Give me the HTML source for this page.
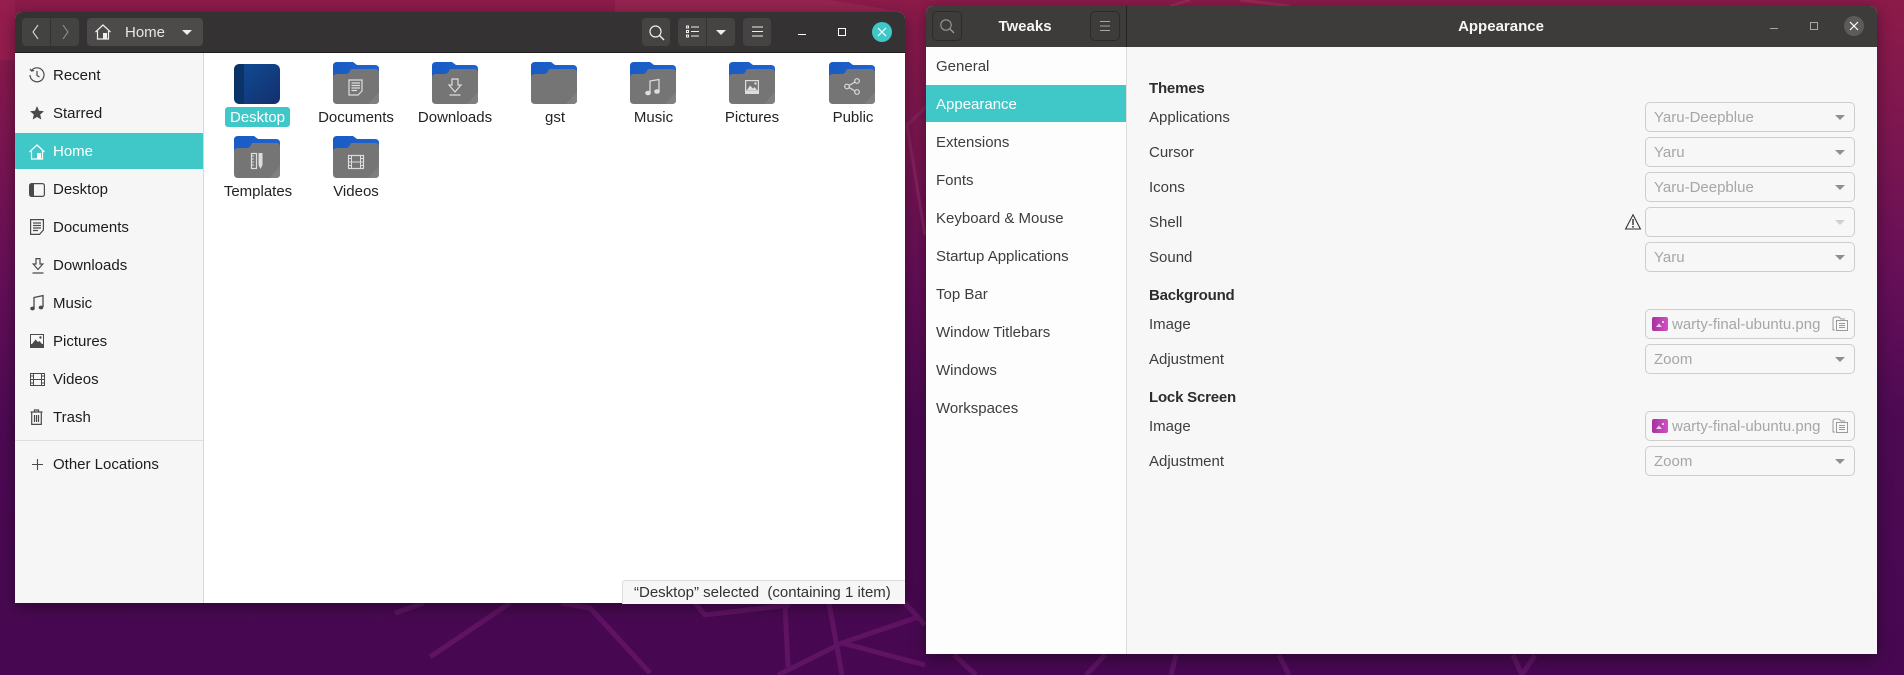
<!DOCTYPE html>
<html><head><meta charset="utf-8"><title>Desktop</title>
<style>
html,body{margin:0;padding:0;width:1904px;height:675px;overflow:hidden;background:#4a0850}
body{position:relative;font-family:"Liberation Sans",sans-serif;font-size:15px;color:#222}
#bg{position:absolute;left:0;top:0;width:1904px;height:675px}
.win{position:absolute;box-shadow:0 4px 16px rgba(0,0,0,.4);border-radius:7px 7px 0 0}
.a{position:absolute}
.t{position:absolute;white-space:nowrap;line-height:20px;height:20px;margin-top:1px}
.c{transform:translateX(-50%)}
.btn{position:absolute;background:#454443;border-radius:4px;top:18px;height:28px}
.tb{position:absolute;border:1px solid #2c2b2a;border-radius:5px;top:11px;height:28px;width:28px}
.side{color:#1c1c1c}
.tw{color:#3d3d3d}
.lab{color:#3d3d3d}
.b{font-weight:bold;color:#2d2d2d;letter-spacing:-.2px;margin-top:0}
.box{position:absolute;left:1645px;width:208px;height:28px;border:1px solid #cdcdcd;border-radius:5px;background:#f7f7f7}
.v{position:absolute;left:1654px;color:#a6a6a6;white-space:nowrap;line-height:20px;margin-top:1px}
.ar{position:absolute;width:0;height:0;border-left:5px solid transparent;border-right:5px solid transparent;border-top:5px solid #8f8f8f;left:1835px}
svg{position:absolute;overflow:visible}
.ic{fill:none;stroke:#4a4a4a;stroke-width:1.2}
.fo{stroke:#ddd;fill:none;stroke-width:1.2}
.ff{fill:#ddd;stroke:none}
</style></head><body>
<svg id="bg" viewBox="0 0 1904 675" style="position:absolute">
<defs><linearGradient id="g" x1="0" y1="0" x2="0" y2="1">
<stop offset="0" stop-color="#8c1b49"/><stop offset=".2" stop-color="#7c1650"/><stop offset=".4" stop-color="#670f58"/><stop offset=".62" stop-color="#4d0a53"/><stop offset="1" stop-color="#470851"/></linearGradient></defs>
<rect width="1904" height="675" fill="url(#g)"/>
<rect x="0" y="0" width="15" height="60" fill="#9a2050" opacity=".7"/>
<path d="M615 0V12H905L830 0Z" fill="#942350"/>
<path d="M1190 0L1170 6M1240 0L1290 6" stroke="#9a2853" stroke-width="3"/>
<path d="M907 125L926 107M907 125L925 235" stroke="#842260" stroke-width="3" fill="none"/>
<g fill="none" stroke="#5e1363" stroke-width="5">
<path d="M395 613L424 603"/><path d="M430 657L510 603"/><path d="M561 603L590 608L650 673"/>
<path d="M695 603L705 615L790 605"/><path d="M785 605L788 667"/><path d="M829 603L842 675"/>
<path d="M778 675L842 643L918 617"/><path d="M842 643L925 665"/><path d="M905 603L925 625"/>
<path d="M954 655L976 675"/><path d="M1105 655L1086 675"/><path d="M1176 655L1171 675"/><path d="M1279 655L1289 675"/><path d="M1513 655L1522 675L1535 655"/>
</g>
</svg>

<!-- Files window -->
<div class="win a" style="left:15px;top:12px;width:890px;height:591px;background:#fff"></div>
<div class="a" style="left:15px;top:12px;width:890px;height:40px;background:#343232;border-radius:7px 7px 0 0;border-bottom:1px solid #1f1e1e"></div>
<div class="a" style="left:15px;top:53px;width:188px;height:550px;background:#f6f6f6;border-right:1px solid #d8d8d8"></div>
<div class="a" style="left:15px;top:133px;width:188px;height:36px;background:#40c8c8"></div>
<div class="a" style="left:15px;top:440px;width:188px;height:1px;background:#dedede"></div>

<div class="btn" style="left:22px;width:28px;border-radius:4px 0 0 4px;background:#434342"></div>
<div class="btn" style="left:51px;width:28px;border-radius:0 4px 4px 0;background:#434342"></div>
<svg style="left:0;top:0" width="300" height="52"><path d="M38 25L33 32L38 39" fill="none" stroke="#d5d5d5" stroke-width="1.1"/><path d="M63 25L68 32L63 39" fill="none" stroke="#8b8b8b" stroke-width="1.1"/></svg>
<div class="btn" style="left:87px;width:116px;background:#4c4b49"></div>
<svg style="left:95px;top:24px" width="16" height="16" viewBox="0 0 16 16"><path d="M.5 8L8 1L15.500 8M2.500 7V15H13.500V7" fill="none" stroke="#eee" stroke-width="1.200"/><rect x="8" y="9" width="4" height="6" fill="#eee"/></svg>
<div class="t" style="left:125px;top:22px;color:#e6e6e6;font-size:15px">Home</div>
<div class="a" style="left:182px;top:30px;border-left:5px solid transparent;border-right:5px solid transparent;border-top:5px solid #eee"></div>

<div class="btn" style="left:642px;width:28px"></div>
<svg style="left:649px;top:25px" width="16" height="16" viewBox="0 0 16 16"><circle cx="6.500" cy="6.500" r="5.500" fill="none" stroke="#eee" stroke-width="1.200"/><path d="M10.500 10.500L15 15" stroke="#eee" stroke-width="1.400"/></svg>
<div class="btn" style="left:678px;width:28px;border-radius:4px 0 0 4px"></div>
<div class="btn" style="left:707px;width:28px;border-radius:0 4px 4px 0"></div>
<svg style="left:686px;top:25px" width="14" height="14" viewBox="0 0 14 14"><rect x=".5" y="1" width="2" height="2" fill="none" stroke="#eee"/><rect x=".5" y="5.500" width="2" height="2" fill="none" stroke="#eee"/><rect x=".5" y="10" width="2" height="2" fill="none" stroke="#eee"/><path d="M5 2H13M5 6.500H13M5 11H13" stroke="#eee"/></svg>
<div class="a" style="left:716px;top:30px;border-left:5px solid transparent;border-right:5px solid transparent;border-top:5px solid #eee"></div>
<div class="btn" style="left:743px;width:28px"></div>
<svg style="left:752px;top:26px" width="11" height="11"><path d="M0 1H11M0 5.500H11M0 10H11" stroke="#eee"/></svg>
<div class="a" style="left:798px;top:34px;width:8px;height:1px;background:#fff"></div>
<div class="a" style="left:838px;top:28px;width:6px;height:6px;border:1px solid #fff"></div>
<div class="a" style="left:872px;top:22px;width:20px;height:20px;border-radius:50%;background:#40c8c8"></div>
<svg style="left:877px;top:27px" width="10" height="10"><path d="M1 1L9 9M9 1L1 9" stroke="#fff" stroke-width="1.200"/></svg>

<!-- sidebar text -->
<div class="t side" style="left:53px;top:65px">Recent</div>
<div class="t side" style="left:53px;top:103px">Starred</div>
<div class="t" style="left:53px;top:141px;color:#fff">Home</div>
<div class="t side" style="left:53px;top:179px">Desktop</div>
<div class="t side" style="left:53px;top:217px">Documents</div>
<div class="t side" style="left:53px;top:255px">Downloads</div>
<div class="t side" style="left:53px;top:293px">Music</div>
<div class="t side" style="left:53px;top:331px">Pictures</div>
<div class="t side" style="left:53px;top:369px">Videos</div>
<div class="t side" style="left:53px;top:407px">Trash</div>
<div class="t side" style="left:53px;top:454px">Other Locations</div>

<!-- sidebar icons -->
<svg style="left:29px;top:67px" width="16" height="16" viewBox="0 0 16 16"><path class="ic" d="M2.500 3.500A7 7 0 1 1 1 8M1 2L2.500 4L5 3.500M8 4V8.500L10.500 10"/></svg>
<svg style="left:30px;top:106px" width="14" height="14" viewBox="0 0 14 14"><path fill="#4a4a4a" d="M7 0L9 4.700L14 5.200L10.200 8.500L11.300 13.500L7 11L2.700 13.500L3.800 8.500L0 5.200L5 4.700Z"/></svg>
<svg style="left:29px;top:144px" width="16" height="16" viewBox="0 0 16 16"><path d="M.5 8L8 1L15.500 8M2.500 7V15H13.500V7" fill="none" stroke="#fff" stroke-width="1.200"/><rect x="8" y="9" width="4" height="6" fill="#fff"/></svg>
<svg style="left:29px;top:183px" width="16" height="14" viewBox="0 0 16 14"><rect x=".6" y=".6" width="14.800" height="12.800" rx="2" fill="none" stroke="#4a4a4a" stroke-width="1.200"/><path d="M1 1H5V13H1Z" fill="#4a4a4a"/></svg>
<svg style="left:30px;top:219px" width="14" height="16" viewBox="0 0 14 16"><path class="ic" d="M.6.6H13.400V11L9.500 15.400H.6ZM3 4H11M3 6.500H11M3 9H11M3 11.500H8"/></svg>
<svg style="left:32px;top:258px" width="12" height="16" viewBox="0 0 12 16"><path class="ic" d="M4 .6H8V6H10.800L6 11.500L1.200 6H4ZM.5 15H11.500"/></svg>
<svg style="left:30px;top:295px" width="14" height="16" viewBox="0 0 14 16"><path d="M4 13V2.500L13 .6V12" fill="none" stroke="#4a4a4a" stroke-width="1.300"/><ellipse cx="2.500" cy="13.500" rx="2.300" ry="1.900" fill="#4a4a4a"/><ellipse cx="11" cy="12.500" rx="2.300" ry="1.900" fill="#4a4a4a"/></svg>
<svg style="left:30px;top:334px" width="14" height="14" viewBox="0 0 14 14"><rect width="14" height="14" fill="#4a4a4a"/><rect x="1" y="1" width="12" height="9" fill="#f6f6f6"/><path d="M2 10L5.500 5.500L8 8L9.500 7L12 10Z" fill="#4a4a4a"/><circle cx="10.500" cy="3.500" r="1.200" fill="#4a4a4a"/></svg>
<svg style="left:30px;top:373px" width="15" height="13" viewBox="0 0 15 13"><rect x=".5" y=".5" width="14" height="12" fill="none" stroke="#4a4a4a"/><path d="M3.500 0V13M11.500 0V13M3.500 6.500H11.500M0 3H3.500M0 6.500H3.500M0 10H3.500M11.500 3H15M11.500 6.500H15M11.500 10H15" stroke="#4a4a4a"/></svg>
<svg style="left:30px;top:409px" width="13" height="16" viewBox="0 0 13 16"><path class="ic" d="M.5 3H12.500M4.500 3V1H8.500V3M1.700 3.500V15.400H11.300V3.500M4.500 6V13M6.500 6V13M8.500 6V13"/></svg>
<svg style="left:32px;top:459px" width="11" height="11"><path d="M5.500 0V11M0 5.500H11" stroke="#4a4a4a" stroke-width="1.100"/></svg>

<!-- folders (defined once, reused) -->
<svg width="0" height="0" style="left:0;top:0"><defs>
<linearGradient id="fb" x1="0" y1="0" x2="1" y2="0"><stop offset="0" stop-color="#1a5bc4"/><stop offset="1" stop-color="#1e63d0"/></linearGradient>
<g id="fold"><path d="M0 4Q0 0 4 0H20L24 3H42Q46 3 46 7V20H0Z" fill="url(#fb)"/><path d="M0 15Q0 12 4 12H13Q16 12 18 7H42Q46 7 46 11V38Q46 42 42 42H4Q0 42 0 38Z" fill="#757575"/><path d="M46 30V38Q46 42 42 42H35Z" fill="#7f7f7f"/></g>
</defs></svg>
<svg style="left:234px;top:64px" width="46" height="40"><defs><linearGradient id="dk" x1="0" y1="0" x2="1" y2="1"><stop offset="0" stop-color="#0f4d96"/><stop offset="1" stop-color="#142f6e"/></linearGradient></defs><rect width="46" height="40" rx="6" fill="url(#dk)"/><path d="M6 0H10V40H6Q0 40 0 34V6Q0 0 6 0Z" fill="#0a3468"/></svg>
<svg style="left:333px;top:62px" width="46" height="42"><use href="#fold"/><path class="fo" d="M16 18H29V29L25 33H16ZM18.500 21H27M18.500 23.500H27M18.500 26H27M18.500 28.500H24"/></svg>
<svg style="left:432px;top:62px" width="46" height="42"><use href="#fold"/><path class="fo" d="M20 17H26V23H29L23 30L17 23H20ZM17.500 33H28.500"/></svg>
<svg style="left:531px;top:62px" width="46" height="42"><use href="#fold"/></svg>
<svg style="left:630px;top:62px" width="46" height="42"><use href="#fold"/><path d="M20 31V19L29 17.500V29" fill="none" stroke="#ddd" stroke-width="1.300"/><ellipse cx="18" cy="31" rx="2.800" ry="2.300" class="ff"/><ellipse cx="27" cy="29.500" rx="2.800" ry="2.300" class="ff"/></svg>
<svg style="left:729px;top:62px" width="46" height="42"><use href="#fold"/><rect x="16" y="18" width="14" height="14" class="ff"/><rect x="17.200" y="19.200" width="11.600" height="9" fill="#757575"/><path d="M18 28L21 23.500L24 26.500L25.500 25L28 28Z" class="ff"/><circle cx="26.500" cy="21.500" r="1.200" class="ff"/></svg>
<svg style="left:829px;top:62px" width="46" height="42"><use href="#fold"/><g class="fo"><circle cx="18" cy="24.500" r="2.300"/><circle cx="28" cy="19" r="2.300"/><circle cx="28" cy="30" r="2.300"/><path d="M20 23.500L26 20M20 25.500L26 29"/></g></svg>
<svg style="left:234px;top:136px" width="46" height="42"><use href="#fold"/><rect x="17.500" y="17.500" width="5" height="15" fill="none" stroke="#ddd" stroke-width="1.200"/><path d="M17.500 20H20M17.500 23H20M17.500 26H20M17.500 29H20" stroke="#ddd"/><path d="M24.500 17H28.500V29L26.500 33L24.500 29Z" class="ff"/></svg>
<svg style="left:333px;top:136px" width="46" height="42"><use href="#fold"/><rect x="15.500" y="19.500" width="15" height="13" fill="none" stroke="#ddd" stroke-width="1.200"/><path d="M18.500 19V33M27.500 19V33M18.500 26H27.500M15 22.500H18.500M15 26H18.500M15 29.500H18.500M27.500 22.500H31M27.500 26H31M27.500 29.500H31" stroke="#ddd"/></svg>

<!-- folder labels -->
<div class="a" style="left:225px;top:107px;width:65px;height:20px;background:#40c8c8;border-radius:3px"></div>
<div class="t c" style="left:257.500px;top:107px;color:#fff">Desktop</div>
<div class="t c" style="left:356px;top:107px">Documents</div>
<div class="t c" style="left:455px;top:107px">Downloads</div>
<div class="t c" style="left:555px;top:107px">gst</div>
<div class="t c" style="left:653.500px;top:107px">Music</div>
<div class="t c" style="left:752px;top:107px">Pictures</div>
<div class="t c" style="left:853px;top:107px">Public</div>
<div class="t c" style="left:258px;top:181px">Templates</div>
<div class="t c" style="left:356px;top:181px">Videos</div>

<!-- statusbar -->
<div class="a" style="left:622px;top:580px;width:282px;height:23px;background:#f6f6f6;border-top:1px solid #dcdcdc;border-left:1px solid #dcdcdc;border-radius:3px 0 0 0"></div>
<div class="t" style="left:634px;top:583px;color:#333;font-size:15px;margin-top:0">“Desktop” selected &nbsp;(containing 1 item)</div>

<!-- Tweaks window -->
<div class="win a" style="left:926px;top:6px;width:951px;height:648px;background:#f7f7f7"></div>
<div class="a" style="left:926px;top:6px;width:951px;height:41px;background:#3e3c3a;border-radius:7px 7px 0 0"></div>
<div class="a" style="left:926px;top:47px;width:200px;height:607px;background:#fdfdfd;border-right:1px solid #dcdcdc"></div>
<div class="a" style="left:1126px;top:6px;width:1px;height:41px;background:#252423"></div>
<div class="a" style="left:926px;top:85px;width:200px;height:37px;background:#40c8c8"></div>

<div class="tb" style="left:932px"></div>
<svg style="left:940px;top:19px" width="15" height="15" viewBox="0 0 15 15"><circle cx="6" cy="6" r="5.200" fill="none" stroke="#9a9895" stroke-width="1.100"/><path d="M10 10L14 14" stroke="#9a9895" stroke-width="1.300"/></svg>
<div class="tb" style="left:1090px"></div>
<svg style="left:1100px;top:21px" width="10" height="10"><path d="M0 .5H10M0 5H10M0 9.500H10" stroke="#a8a6a3"/></svg>
<div class="t c" style="left:1025px;top:16px;color:#f5f5f5;font-weight:bold">Tweaks</div>
<div class="t c" style="left:1501px;top:16px;color:#f5f5f5;font-weight:bold">Appearance</div>
<div class="a" style="left:1770px;top:28px;width:8px;height:1px;background:#a8a6a3"></div>
<div class="a" style="left:1810px;top:22px;width:6px;height:6px;border:1px solid #a8a6a3"></div>
<div class="a" style="left:1844px;top:16px;width:20px;height:20px;border-radius:50%;background:#5c5b5a"></div>
<svg style="left:1849px;top:21px" width="10" height="10"><path d="M1 1L9 9M9 1L1 9" stroke="#fff" stroke-width="1.200"/></svg>

<div class="t tw" style="left:936px;top:56px">General</div>
<div class="t" style="left:936px;top:94px;color:#fff">Appearance</div>
<div class="t tw" style="left:936px;top:132px">Extensions</div>
<div class="t tw" style="left:936px;top:170px">Fonts</div>
<div class="t tw" style="left:936px;top:208px">Keyboard &amp; Mouse</div>
<div class="t tw" style="left:936px;top:246px">Startup Applications</div>
<div class="t tw" style="left:936px;top:284px">Top Bar</div>
<div class="t tw" style="left:936px;top:322px">Window Titlebars</div>
<div class="t tw" style="left:936px;top:360px">Windows</div>
<div class="t tw" style="left:936px;top:398px">Workspaces</div>

<div class="t b" style="left:1149px;top:79px">Themes</div>
<div class="t lab" style="left:1149px;top:107px">Applications</div>
<div class="t lab" style="left:1149px;top:142px">Cursor</div>
<div class="t lab" style="left:1149px;top:177px">Icons</div>
<div class="t lab" style="left:1149px;top:212px">Shell</div>
<div class="t lab" style="left:1149px;top:247px">Sound</div>
<div class="t b" style="left:1149px;top:286px">Background</div>
<div class="t lab" style="left:1149px;top:314px">Image</div>
<div class="t lab" style="left:1149px;top:349px">Adjustment</div>
<div class="t b" style="left:1149px;top:388px">Lock Screen</div>
<div class="t lab" style="left:1149px;top:416px">Image</div>
<div class="t lab" style="left:1149px;top:451px">Adjustment</div>

<div class="box" style="top:102px"></div><div class="v" style="top:107px">Yaru-Deepblue</div><div class="ar" style="top:115px"></div>
<div class="box" style="top:137px"></div><div class="v" style="top:142px">Yaru</div><div class="ar" style="top:150px"></div>
<div class="box" style="top:172px"></div><div class="v" style="top:177px">Yaru-Deepblue</div><div class="ar" style="top:185px"></div>
<div class="box" style="top:207px"></div><div class="ar" style="top:220px;border-top-color:#cfcfcf"></div>
<div class="box" style="top:242px"></div><div class="v" style="top:247px">Yaru</div><div class="ar" style="top:255px"></div>
<svg style="left:1625px;top:214px" width="16" height="16" viewBox="0 0 16 16"><path d="M8 .8L15.400 15H.6Z" fill="none" stroke="#333" stroke-width="1.100"/><path d="M8 5V11" stroke="#333" stroke-width="1.400"/><rect x="7.200" y="12" width="1.600" height="1.600" fill="#333"/></svg>

<div class="box" style="top:309px"></div><div class="v" style="top:314px;left:1672px">warty-final-ubuntu.png</div>
<div class="box" style="top:344px"></div><div class="v" style="top:349px">Zoom</div><div class="ar" style="top:357px"></div>
<div class="box" style="top:411px"></div><div class="v" style="top:416px;left:1672px">warty-final-ubuntu.png</div>
<div class="box" style="top:446px"></div><div class="v" style="top:451px">Zoom</div><div class="ar" style="top:459px"></div>

<svg style="left:1652px;top:317px" width="16" height="14"><defs><linearGradient id="pu" x1="0" y1="0" x2="1" y2="0"><stop offset="0" stop-color="#a8329e"/><stop offset="1" stop-color="#d04fc4"/></linearGradient></defs><rect width="16" height="14" rx="2" fill="url(#pu)"/><path d="M4 10L7 6.500L10 10Z" fill="#f0cdec"/><rect x="10" y="4" width="2" height="2" fill="#f0cdec"/></svg>
<svg style="left:1652px;top:419px" width="16" height="14"><rect width="16" height="14" rx="2" fill="url(#pu)"/><path d="M4 10L7 6.500L10 10Z" fill="#f0cdec"/><rect x="10" y="4" width="2" height="2" fill="#f0cdec"/></svg>
<svg style="left:1832px;top:316px" width="16" height="15" viewBox="0 0 16 15"><path d="M3 14H1V3Q1 1 3 1H7L9 3H13" fill="none" stroke="#9a9a9a"/><rect x="4.500" y="4.500" width="11" height="10" fill="none" stroke="#9a9a9a"/><path d="M7 7.500H13M7 9.500H13M7 11.500H13" stroke="#9a9a9a"/></svg>
<svg style="left:1832px;top:418px" width="16" height="15" viewBox="0 0 16 15"><path d="M3 14H1V3Q1 1 3 1H7L9 3H13" fill="none" stroke="#9a9a9a"/><rect x="4.500" y="4.500" width="11" height="10" fill="none" stroke="#9a9a9a"/><path d="M7 7.500H13M7 9.500H13M7 11.500H13" stroke="#9a9a9a"/></svg>
</body></html>
